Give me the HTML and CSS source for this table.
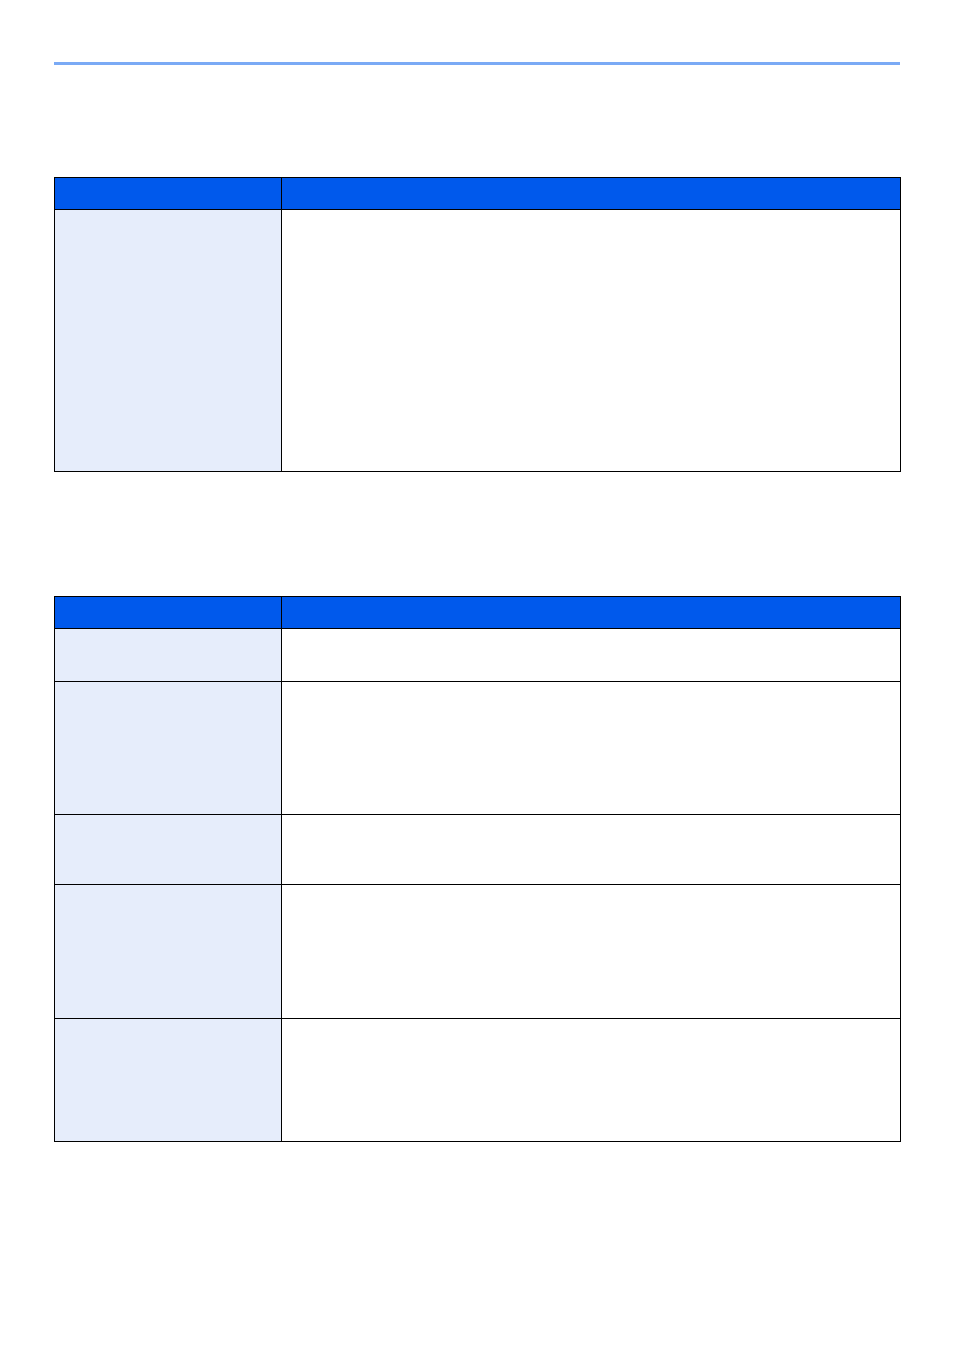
FILE: index.html
```html
<!DOCTYPE html>
<html lang="en">
<head>
<meta charset="utf-8">
<title>Tables</title>
<link rel="stylesheet" href="styles.css">
</head>
<body>
<div class="page">
  <div class="rule"></div>
  <div class="table table-one">
    <div class="cell head"></div><div class="cell head"></div>
    <div class="cell key h262"></div><div class="cell val h262"></div>
  </div>
  <div class="table table-two">
    <div class="cell head"></div><div class="cell head"></div>
    <div class="cell key h53"></div><div class="cell val h53"></div>
    <div class="cell key h133"></div><div class="cell val h133"></div>
    <div class="cell key h70"></div><div class="cell val h70"></div>
    <div class="cell key h134"></div><div class="cell val h134"></div>
    <div class="cell key h123"></div><div class="cell val h123"></div>
  </div>
</div>
</body>
</html>
```

FILE: styles.css
```css
* { box-sizing: border-box; }
html, body { margin: 0; padding: 0; background: #ffffff; font-family: "Liberation Sans", Arial, sans-serif; }
.page { padding: 62px 0 0 54px; width: 954px; min-height: 1350px; }
.rule { width: 846px; height: 3px; background: #7aaaf5; }
.table {
  display: grid;
  grid-template-columns: 227px 619px;
  width: 847px;
  border-left: 1px solid #000;
  border-top: 1px solid #000;
}
.table-one { margin-top: 112px; }
.table-two { margin-top: 124px; }
.cell { border-right: 1px solid #000; border-bottom: 1px solid #000; }
.head { background: #0059ec; height: 32px; }
.key { background: #e6edfb; }
.val { background: #ffffff; }
.h262 { height: 262px; }
.h53 { height: 53px; }
.h133 { height: 133px; }
.h70 { height: 70px; }
.h134 { height: 134px; }
.h123 { height: 123px; }
```
